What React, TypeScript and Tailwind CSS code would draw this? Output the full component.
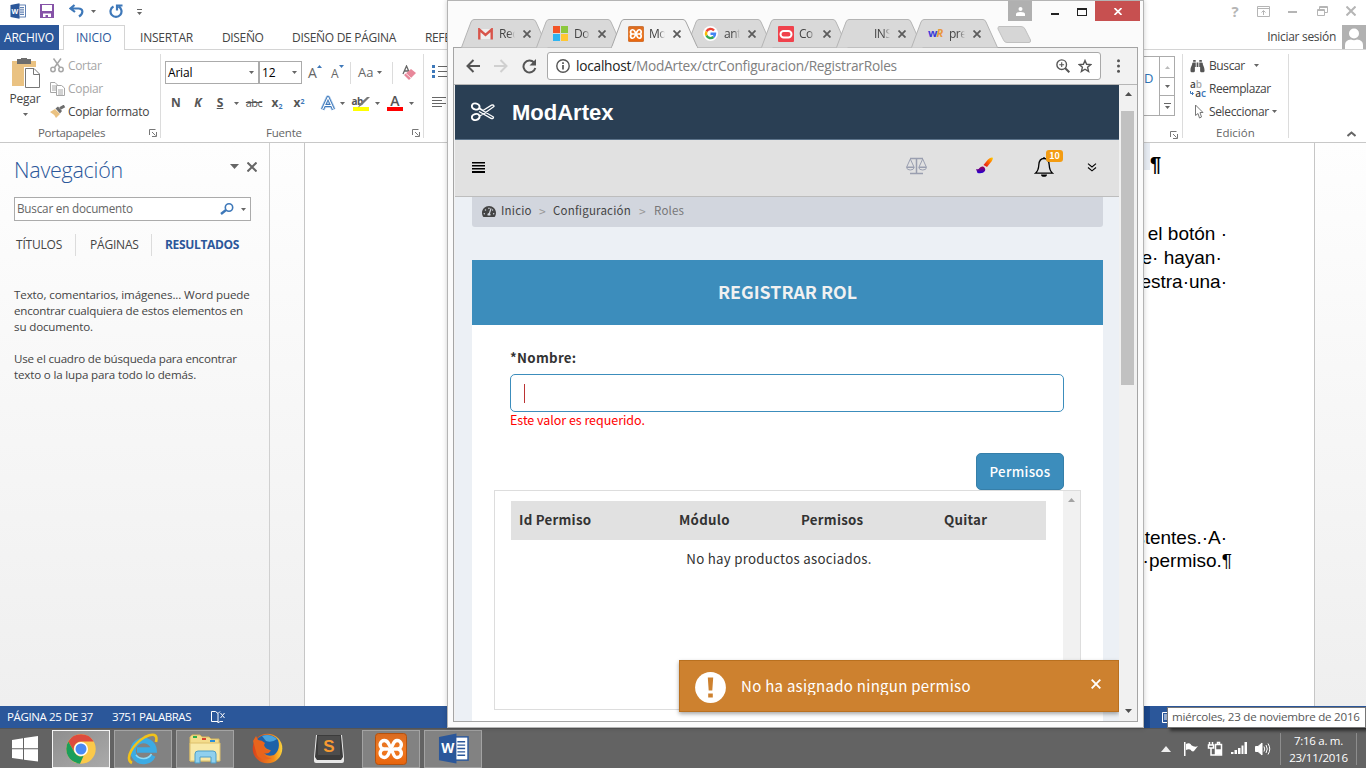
import React from "react";
import { FaTachometerAlt, FaBinoculars } from "react-icons/fa";

const UI = "font-['Open_Sans','Noto_Sans',sans-serif]";
const SRC = "font-['Noto_Sans_CJK_SC','Noto_Sans',sans-serif]";

function Caret({ c = "fill-[#666]" }: { c?: string }) {
  return (
    <svg width="5" height="3" viewBox="0 0 5 3" className={"shrink-0 " + c}>
      <path d="M0 0H5L2.500 3Z" />
    </svg>
  );
}

function Launcher() {
  return (
    <svg width="8" height="8" viewBox="0 0 8 8" className="shrink-0 fill-none stroke-[#777]">
      <path d="M0.500 6V0.500H6.500M3 3L6.500 6.500M7.500 3V7.500H3" />
    </svg>
  );
}

function WordLogo({ size }: { size: number }) {
  return (
    <svg width={size} height={size} viewBox="0 0 32 32" className="shrink-0">
      <rect x="17" y="4" width="14" height="24" fill="#fff" stroke="#2b579a" strokeWidth="1.500" />
      <path d="M20 9H28M20 12.500H28M20 16H28M20 19.500H28M20 23H28" stroke="#2b579a" strokeWidth="1.500" />
      <path d="M1 4L19 0.500V31.500L1 28Z" fill="#2b579a" />
      <text x="10" y="21" fontSize="14" fontWeight="bold" fill="#fff" textAnchor="middle" fontFamily="Open Sans">W</text>
    </svg>
  );
}

function Xampp({ size }: { size: number }) {
  return (
    <svg width={size} height={size} viewBox="0 0 32 32" className="shrink-0">
      <defs>
        <linearGradient id="xg" x1="0" y1="0" x2="0" y2="1">
          <stop offset="0" stopColor="#d96a20" />
          <stop offset="0.500" stopColor="#f07a22" />
          <stop offset="1" stopColor="#e8640c" />
        </linearGradient>
      </defs>
      <rect x="0.500" y="0.500" width="31" height="31" rx="3" fill="url(#xg)" stroke="#b3520f" />
      <path
        d="M8.500 16A4.300 4.300 0 0 1 9.500 7.500C13.500 7.500 13.500 11 16 15.500S18.500 24.500 22 24.500A4.300 4.300 0 0 0 23 16H19.500M23 16A4.300 4.300 0 0 0 22 7.500C18.500 7.500 18.500 11 16 15.500S13.500 24.500 9.500 24.500A4.300 4.300 0 0 1 8.500 16H12.500"
        fill="none"
        stroke="#fff"
        strokeWidth="3.400"
        strokeLinecap="round"
        strokeLinejoin="round"
      />
    </svg>
  );
}

/* ---------- Word ---------- */

function WordTitleBar() {
  return (
    <div className="flex h-[25px] items-center bg-white">
      <div className="flex w-[447px] items-center pl-[10px] pb-[3px]">
        <WordLogo size={16} />
        <svg width="14" height="14" viewBox="0 0 14 14" className="ml-[14px]">
          <path d="M0 0H14V14H0Z" fill="#8653a8" />
          <path d="M2 1H12V7H2ZM3 9.500H11V13H8V11H5.500V13H3Z" fill="#fff" />
        </svg>
        <svg width="15" height="14" viewBox="0 0 15 14" className="ml-[15px] fill-none stroke-[#3e78b9]" strokeWidth="2.200">
          <path d="M5.500 1L1.500 4.500L6 8M2 4.500H9.500C14 4.500 15 9 10 12.500" />
        </svg>
        <span className="ml-[7px] flex"><Caret /></span>
        <svg width="14" height="15" viewBox="0 0 14 15" className="ml-[13px] fill-none stroke-[#3e78b9]" strokeWidth="2.200">
          <path d="M4.500 2.500A5.500 5.500 0 1 0 9.500 2.500M8 6.500V1.500H13.500" />
        </svg>
        <svg width="7" height="7" viewBox="0 0 7 7" className="ml-[13px] mt-[3px] fill-[#666]">
          <path d="M1 0H6V1H1ZM1 3H6L3.500 6Z" />
        </svg>
      </div>
      <div className="ml-auto flex w-[138px] items-center pb-[3px] text-[#b5b5b5]">
        <span className={UI + " ml-[2px] w-[10px] text-center text-[15px] font-bold leading-[16px]"}>?</span>
        <svg width="13" height="11" viewBox="0 0 13 11" className="ml-[17px] fill-none stroke-current">
          <path d="M0.500 0.500H12.500V10.500H0.500ZM0.500 2.500H12.500M6.500 9V5M4.500 6.500L6.500 4.500L8.500 6.500" />
        </svg>
        <svg width="9" height="3" className="ml-[18px] mt-[3px] fill-current"><path d="M0 0H9V2H0Z" /></svg>
        <svg width="11" height="10" viewBox="0 0 11 10" className="ml-[20px] fill-none stroke-current">
          <path d="M0.500 3.500H7.500V9.500H0.500ZM0.500 4.500H7.500M2.500 3V0.500H10.500V6.500H8M2.500 1.500H10.500" />
        </svg>
        <svg width="10" height="10" viewBox="0 0 10 10" className="ml-[18px] fill-none stroke-current" strokeWidth="2">
          <path d="M0.500 0.500L9.500 9.500M9.500 0.500L0.500 9.500" />
        </svg>
      </div>
    </div>
  );
}

function WordTabs() {
  return (
    <div className={UI + " flex h-[25px] items-center whitespace-nowrap border-b border-[#d4d4d4] bg-white text-[12px] text-[#444]"}>
      <div className="flex h-[25px] w-[59px] items-center bg-[#2b579a] pl-[4px] pt-px text-white tracking-[-0.2px]">ARCHIVO</div>
      <div className="ml-[4px] mt-px flex h-[25px] w-[62px] items-center border-x border-t border-[#d4d4d4] bg-white pl-[12px] text-[#2b579a] tracking-[-0.1px]">INICIO</div>
      <span className="ml-[15px] mt-px w-[82px] tracking-[-0.2px]">INSERTAR</span>
      <span className="mt-px w-[70px] tracking-[-0.35px]">DISEÑO</span>
      <span className="mt-px w-[133px] tracking-[-0.3px]">DISEÑO DE PÁGINA</span>
      <span className="mt-px tracking-[-0.35px]">REFERENCIAS</span>
      <span className="ml-auto mr-[6px] tracking-[-0.3px]">Iniciar sesión</span>
      <svg width="24" height="24" viewBox="0 0 24 24" className="shrink-0">
        <rect width="24" height="24" fill="#b1b1b1" />
        <circle cx="12" cy="8.500" r="5" fill="#fff" />
        <path d="M3 24V20Q3 15 9 14.500Q12 16 15 14.500Q21 15 21 20V24Z" fill="#fff" />
      </svg>
    </div>
  );
}

function Sep() {
  return <span className="h-[22px] w-px bg-[#dcdcdc]" />;
}

function Ribbon() {
  return (
    <div className={UI + " flex h-[93px] whitespace-nowrap border-b border-[#c8c8c8] bg-white text-[12px] text-[#444]"}>
      <div className="flex w-[160px] shrink-0 flex-col">
        <div className="flex h-[75px]">
          <div className="flex w-[50px] flex-col items-center pt-[8px]">
            <svg width="29" height="31" viewBox="0 0 29 31" className="ml-[3px]">
              <path d="M0 3H24V28H0Z" fill="#eac282" />
              <path d="M5 1H9V0H15V1H19V6H5Z" fill="#6d6d6d" />
              <path d="M12 9H29V31H12Z" fill="#fff" />
              <path d="M13.500 10.500H22L27.500 16V29.500H13.500Z" fill="#fff" stroke="#777" />
              <path d="M21.500 10.500V16.500H27.500" fill="none" stroke="#777" />
            </svg>
            <span className="mt-[1px] leading-[18px] tracking-[-0.25px]">Pegar</span>
            <span className="mt-[5px]"><Caret /></span>
          </div>
          <div className="flex flex-col pt-[4px]">
            <div className="flex h-[23px] items-center text-[#a6a6a6]">
              <svg width="15" height="15" viewBox="0 0 15 15" className="mr-[3px] fill-none stroke-current" strokeWidth="1.500">
                <circle cx="3" cy="11.500" r="2.200" /><circle cx="11" cy="11.500" r="2.200" /><path d="M3.500 0.500L10 9.500M11 0.500L4.500 9.500" />
              </svg>
              <span className="tracking-[-0.35px]">Cortar</span>
            </div>
            <div className="flex h-[23px] items-center text-[#a6a6a6]">
              <svg width="15" height="14" viewBox="0 0 15 14" className="mr-[3px] fill-none stroke-current">
                <path d="M0.500 0.500H5L7.500 3V10.500H0.500ZM2 4H6M2 6H6M2 8H6" /><path d="M6.500 3.500H11.500L14.500 6V13.500H6.500Z" className="fill-white" /><path d="M8 8H13M8 10H13M8 12H13" />
              </svg>
              <span className="tracking-[-0.3px]">Copiar</span>
            </div>
            <div className="flex h-[23px] items-center">
              <svg width="16" height="14" viewBox="0 0 16 14" className="mr-[2px]">
                <path d="M0 7L5 4L10 9L6 13Q4 9 0 7Z" fill="#eac282" /><path d="M5.500 3.500L8 1.500L12 6L10 8.500Z" fill="#6d6d6d" /><path d="M10 3.500L14.500 1" stroke="#6d6d6d" strokeWidth="3" />
              </svg>
              <span className="tracking-[-0.3px]">Copiar formato</span>
            </div>
          </div>
        </div>
        <div className="mt-px flex items-center text-[#666]">
          <span className="ml-[38px] w-[111px] text-[11.500px] leading-[18px] tracking-[-0.3px]">Portapapeles</span>
          <Launcher />
        </div>
      </div>
      <span className="mt-[4px] h-[84px] w-px bg-[#dcdcdc]" />
      <div className="flex w-[262px] shrink-0 flex-col pl-[4px]">
        <div className="flex h-[75px] flex-col">
          <div className="flex h-[43px] items-center pt-[2px]">
            <div className="flex h-[23px] w-[94px] items-center justify-between border border-[#ababab] pl-[2px] pr-[4px] text-black tracking-[-0.2px]">Arial<Caret /></div>
            <div className="flex h-[23px] w-[43px] items-center justify-between border border-[#ababab] pl-[2px] pr-[4px] text-black tracking-[-0.2px]">12<Caret /></div>
            <span className="ml-[6px] flex w-[23px] items-start text-[14px] text-[#666]">A<svg width="5" height="3" className="mt-[3px] fill-[#3e78b9]"><path d="M0 3H5L2.500 0Z" /></svg></span>
            <span className="flex w-[19px] items-start pt-[2px] text-[12px] text-[#666]">A<svg width="5" height="3" className="fill-[#3e78b9]"><path d="M0 0H5L2.500 3Z" /></svg></span>
            <Sep />
            <span className="ml-[7px] flex w-[34px] items-center gap-[4px] text-[13px] text-[#666]">Aa<Caret /></span>
            <Sep />
            <svg width="15" height="16" viewBox="0 0 15 16" className="ml-[9px]">
              <path d="M1 9L4.500 1L8 9M2.500 6H6.500" fill="none" stroke="#666" strokeWidth="1.300" />
              <path d="M2 10L9 4L14 8L7 15Z" fill="#e8879a" /><path d="M4 8.500L9 13" stroke="#fff" strokeWidth="0.800" />
            </svg>
          </div>
          <div className="flex h-[20px] items-center text-[12px] text-[#555]">
            <b className="w-[22px] text-center">N</b>
            <b className="w-[22px] text-center italic">K</b>
            <b className="w-[22px] text-center underline">S</b>
            <span className="flex w-[11px] justify-center"><Caret /></span>
            <span className="w-[24px] text-center text-[11px] tracking-[-0.6px] line-through">abc</span>
            <span className="w-[22px] text-center font-bold">x<sub className="text-[7px] text-[#3e78b9]">2</sub></span>
            <span className="w-[22px] text-center font-bold">x<sup className="text-[7px] text-[#3e78b9]">2</sup></span>
            <span className="ml-[3px]"><Sep /></span>
            <svg width="18" height="17" viewBox="0 0 18 17" className="ml-[6px] fill-none" strokeLinejoin="round">
              <path d="M3.500 14.500L9 2.500L14.500 14.500M5.500 10.500H12.500" stroke="#a9c8ea" strokeWidth="4.500" />
              <path d="M3.500 14.500L9 2.500L14.500 14.500M5.500 10.500H12.500" stroke="#3e78b9" strokeWidth="3" />
              <path d="M3.500 14.500L9 2.500L14.500 14.500M5.500 10.500H12.500" stroke="#fff" strokeWidth="1.100" />
            </svg>
            <span className="flex w-[11px] justify-center"><Caret /></span>
            <span className="ml-[1px] flex w-[23px] flex-col items-center">
              <span className="relative w-[18px] text-[10px] font-bold leading-[11px] tracking-[-0.5px]">ab
                <svg width="12" height="11" viewBox="0 0 12 11" className="absolute left-[6px] top-px"><path d="M12 0L4 8L0 10.500L2 6.500L9 0Z" fill="#777" /></svg>
              </span>
              <span className="h-[4px] w-[16px] bg-[#ff0]" />
            </span>
            <span className="flex w-[11px] justify-center"><Caret /></span>
            <span className="ml-[1px] flex w-[22px] flex-col items-center text-[14px] font-semibold leading-[12px]">
              A<span className="h-[4px] w-[16px] bg-[red]" />
            </span>
            <span className="flex w-[11px] justify-center"><Caret /></span>
          </div>
        </div>
        <div className="mt-px flex items-center text-[#666]">
          <span className="ml-[101px] w-[146px] text-[11.500px] leading-[18px] tracking-[-0.2px]">Fuente</span>
          <Launcher />
        </div>
      </div>
      <span className="mt-[4px] h-[84px] w-px bg-[#dcdcdc]" />
      <div className="flex w-[720px] shrink-0 flex-col pl-[8px] pt-[13px]">
        <svg width="16" height="48" viewBox="0 0 16 48">
          <path d="M6 3.500H16M6 8.500H16M6 13.500H16M0 34.500H14M0 37.500H10M0 40.500H14M0 43.500H10" stroke="#666" />
          <path d="M0 2H3V5H0ZM0 7H3V10H0ZM0 12H3V15H0Z" fill="#3e78b9" />
        </svg>
      </div>
      <div className="flex w-[38px] shrink-0 flex-col items-end">
        <div className="mr-[7px] mt-[6px] flex h-[60px] w-[31px] border-y border-r border-[#ababab]">
          <span className="flex-1 pt-[12px] text-[13px] text-[#2e74b5]">D</span>
          <div className="flex w-[15px] flex-col border-l border-[#ababab]">
            <span className="flex h-[20px] items-center justify-center"><svg width="5" height="3" className="fill-[#bbb]"><path d="M0 3H5L2.500 0Z" /></svg></span>
            <span className="flex h-[19px] items-center justify-center border-y border-[#ababab]"><Caret /></span>
            <span className="flex flex-1 flex-col items-center justify-center gap-[2px]"><span className="h-px w-[7px] bg-[#666]" /><Caret /></span>
          </div>
        </div>
        <span className="mr-[4px] mt-[15px]"><Launcher /></span>
      </div>
      <span className="mt-[4px] h-[84px] w-px bg-[#dcdcdc]" />
      <div className="flex w-[105px] shrink-0 flex-col pl-[7px]">
        <div className="flex h-[75px] flex-col pt-[4px]">
          <div className="flex h-[23px] items-center"><FaBinoculars className="mr-[4px] h-[14px] w-[15px] text-[#555]" /><span className="w-[45px] tracking-[-0.4px]">Buscar</span><Caret /></div>
          <div className="flex h-[23px] items-center">
            <span className="mr-[3px] flex h-[18px] w-[16px] flex-col text-[10px] font-semibold leading-[9px]">
              <span>a<span className="text-[#aaa]">b</span></span>
              <span className="flex items-center justify-between">
                <svg width="4" height="5" viewBox="0 0 4 5" className="fill-none stroke-[#3e78b9]"><path d="M0.500 0V2.500H3M2 1L3.500 2.500L2 4" /></svg>
                <span>a<span className="text-[#3e78b9]">c</span></span>
              </span>
            </span>
            <span className="tracking-[-0.45px]">Reemplazar</span>
          </div>
          <div className="flex h-[23px] items-center">
            <svg width="9" height="15" viewBox="0 0 9 15" className="ml-[5px] mr-[5px] fill-white stroke-[#777]"><path d="M0.500 1L8 8.500H5L6.500 13L4.500 14L3 9.500L0.500 11.500Z" /></svg>
            <span className="w-[63px] tracking-[-0.35px]">Seleccionar</span><Caret />
          </div>
        </div>
        <span className="ml-[26px] mt-px text-[11.500px] leading-[18px] text-[#666]">Edición</span>
      </div>
      <span className="mt-[4px] h-[84px] w-px bg-[#dcdcdc]" />
      <svg width="9" height="6" viewBox="0 0 9 6" className="ml-[58px] mt-[81px] fill-none stroke-[#666]" strokeWidth="2"><path d="M0.500 5L4.500 1.500L8.500 5" /></svg>
    </div>
  );
}

function NavPane() {
  return (
    <div className={UI + " w-[270px] shrink-0 whitespace-nowrap border-r border-[#d0d0d0] pl-[14px] text-[12px] text-[#444]"}>
      <div className="flex h-[53px] items-center">
        <span className="w-[216px] pt-px text-[21.500px] font-light tracking-[-0.26px] text-[#2b579a]">Navegación</span>
        <svg width="9" height="5" className="mb-[6px] fill-[#666]"><path d="M0 0H9L4.500 5Z" /></svg>
        <svg width="10" height="10" viewBox="0 0 10 10" className="mb-[6px] ml-[8px] fill-none stroke-[#666]" strokeWidth="2"><path d="M0.500 0.500L9.500 9.500M9.500 0.500L0.500 9.500" /></svg>
      </div>
      <div className="mt-[1px] flex h-[24px] w-[237px] items-center border border-[#ababab] bg-white pl-[2px]">
        <span className="w-[203px] text-[11.700px] tracking-[-0.2px] text-[#666]">Buscar en documento</span>
        <svg width="14" height="12" viewBox="0 0 14 12" className="fill-none stroke-[#3e78b9]"><circle cx="9" cy="4.500" r="3.700" strokeWidth="1.600" /><path d="M1 11L6 7" strokeWidth="2.400" /></svg>
        <span className="ml-[7px]"><Caret /></span>
      </div>
      <div className="mt-[13px] flex h-[22px] items-center">
        <span className="ml-[2px] w-[59px] tracking-[-0.2px]">TÍTULOS</span><Sep />
        <span className="ml-[14px] w-[61px] tracking-[-0.2px]">PÁGINAS</span><Sep />
        <b className="ml-[13px] tracking-[-0.33px] text-[#2b579a]">RESULTADOS</b>
      </div>
      <div className="mt-[31px] text-[11.600px] leading-[16px]">
        <p className="tracking-[-0.12px]">Texto, comentarios, imágenes... Word puede</p>
        <p className="tracking-[-0.22px]">encontrar cualquiera de estos elementos en</p>
        <p className="tracking-[-0.15px]">su documento.</p>
        <p className="mt-[16px] tracking-[-0.22px]">Use el cuadro de búsqueda para encontrar</p>
        <p className="tracking-[-0.17px]">texto o la lupa para todo lo demás.</p>
      </div>
    </div>
  );
}

function WordBody() {
  return (
    <div className="flex h-[563px] bg-linear-to-b from-[#fefefe] to-[#efefef]">
      <NavPane />
      <div className="ml-[34px] flex w-[1011px] flex-col items-end whitespace-pre border-x border-[#c6c6c6] bg-white pr-[87px] font-['Liberation_Sans',sans-serif] text-[19px] leading-[24px] text-black">
        <div className="mr-[66px] flex h-[27px] items-center">
          <span className="h-[27px] w-[7px] bg-[#e7ecf3]" />
          <span className="pt-[14px] text-[20px] font-bold">¶</span>
        </div>
        <span className="mt-[52px]">mediante· el botón ·</span>
        <span>que· no· se· hayan· </span>
        <span>se· muestra·una·</span>
        <span className="mt-[232px]">existentes.·A·</span>
        <span className="-mr-[5px] -mt-px">un·permiso.¶</span>
      </div>
    </div>
  );
}

function StatusBar() {
  return (
    <div className={UI + " flex h-[22px] items-center whitespace-nowrap bg-[#2b579a] text-[11.500px] text-white"}>
      <span className="ml-[7px] w-[105px] tracking-[-0.38px]">PÁGINA 25 DE 37</span>
      <span className="w-[99px] tracking-[-0.45px]">3751 PALABRAS</span>
      <svg width="15" height="12" viewBox="0 0 15 12" className="fill-none stroke-white"><path d="M7 10.500H0.500V0.500H4.500L7 2.500V12L9 10.500H12M7 2.500L9 0.500M9.500 2L13.500 7M13.500 2L9.500 7" /></svg>
      <div className="ml-auto flex h-[22px] w-[222px] items-center">
        <span className="h-[22px] w-[6px] bg-[#1b468a]" />
        <svg width="10" height="11" viewBox="0 0 10 11" className="ml-[12px] fill-none stroke-white"><path d="M0.500 0.500H9.500V10.500H0.500ZM2 3H8M2 5H8M2 7H8" /></svg>
      </div>
    </div>
  );
}

/* ---------- Taskbar ---------- */

function TaskButton({ children, look = "plain" }: { children: React.ReactNode; look?: "plain" | "open" | "active" }) {
  const looks = {
    plain: "border-transparent",
    open: "border-[#a3a3a3] bg-[#828282]",
    active: "border-[#f4f4f4] bg-linear-to-br from-[#8e8e8e] to-[#aaa]",
  };
  return <div className={"flex h-[38px] w-[58px] items-center justify-center border " + looks[look]}>{children}</div>;
}

function Taskbar() {
  return (
    <div className="flex h-[40px] items-center border-t border-[#555] bg-[#636363]">
      <svg width="27" height="26" viewBox="0 0 27 26" className="ml-[12px] mr-[13px] fill-white">
        <path d="M0 4L11 2.300V12.300H0ZM12 2.100L26 0V12.300H12ZM0 13.300H11V23.500L0 22ZM12 13.300H26V25.500L12 23.700Z" />
      </svg>
      <div className="flex gap-[4px]">
        <TaskButton look="active">
          <svg width="30" height="30" viewBox="0 0 30 30">
            <circle cx="15" cy="15" r="14.700" fill="#fbc94a" />
            <path d="M2.300 7.600A14.700 14.700 0 0 1 27.800 7.600H15A7.400 7.400 0 0 0 8.600 18.600Z" fill="#dd4b3e" />
            <path d="M2.300 7.600L8.600 18.600A7.400 7.400 0 0 0 17.500 22L14 29.700A14.700 14.700 0 0 1 2.300 7.600Z" fill="#1b9e5a" />
            <circle cx="15" cy="15" r="7" fill="#fff" /><circle cx="15" cy="15" r="5.500" fill="#4a8af4" />
          </svg>
        </TaskButton>
        <TaskButton look="open">
          <svg width="32" height="32" viewBox="0 0 32 32" fill="none">
            <path d="M26 22.500A10.500 10.500 0 1 1 27 17H10" stroke="#3cabe4" strokeWidth="5.500" />
            <path d="M24.500 21A9.500 9.500 0 0 1 9 22" stroke="#8fdcf8" strokeWidth="1.500" />
            <path d="M5 30C-3 26 6 11 18 4C26 0 31 1 29 9" stroke="#f2c21a" strokeWidth="2.600" />
          </svg>
        </TaskButton>
        <TaskButton look="open">
          <svg width="32" height="30" viewBox="0 0 32 30">
            <path d="M1 3L3 1H11L13 3H20L22 5H30V27H1Z" fill="#f3dc8c" stroke="#d8b95e" />
            <path d="M4 2H8V4H4Z" fill="#2fae4a" /><path d="M13 4H17V6H13Z" fill="#d9432f" /><path d="M21 6H26V8H21Z" fill="#2a8fd8" />
            <path d="M1 9H31V27H1Z" fill="#f8e9a8" stroke="#dcc06c" />
            <path d="M6 29V20Q6 17 9 17H24Q27 17 27 20V29H22V23H11V29Z" fill="#8fd0ee" stroke="#4f9fc8" />
          </svg>
        </TaskButton>
        <TaskButton>
          <svg width="31" height="31" viewBox="0 0 31 31">
            <defs><linearGradient id="ff" x1="0" y1="0" x2="1" y2="0"><stop offset="0" stopColor="#d8421c" /><stop offset="0.700" stopColor="#f08a1c" /><stop offset="1" stopColor="#fbd43c" /></linearGradient></defs>
            <circle cx="15.500" cy="15.500" r="14.800" fill="url(#ff)" />
            <path d="M5 6A14 14 0 0 1 26 7Q29 16 22 22Q15 24 12 20Q18 20 18 17Q13 16 12 12Q9 10 5 11Z" fill="#1e62a8" />
            <path d="M10 3Q18 0 25 6Q20 10 14 8Z" fill="#4aa3dc" />
            <path d="M1 8L4 3L6 7Q10 7 13 10L11 14Q14 18 19 17Q17 22 11 20Q13 25 20 25Q10 29 5 22Z" fill="#e8641c" />
          </svg>
        </TaskButton>
        <TaskButton>
          <svg width="32" height="30" viewBox="0 0 32 30">
            <path d="M3 1H29L31 23V27Q31 29 29 29H3Q1 29 1 27V23Z" fill="#e8e8e8" />
            <path d="M4 1H28L30 23L28 26H4L2 23Z" fill="#3c3c3c" />
            <path d="M5 2H27V21H5Z" fill="#4d4d4d" />
            <text x="16" y="17.500" fontSize="17" fontWeight="bold" fill="#f79a32" textAnchor="middle" fontFamily="Liberation Sans">S</text>
          </svg>
        </TaskButton>
        <TaskButton look="open"><Xampp size={32} /></TaskButton>
        <TaskButton look="open"><WordLogo size={31} /></TaskButton>
      </div>
      <div className={UI + " ml-auto flex h-[39px] w-[205px] items-center text-[11.500px] text-white"}>
        <svg width="10" height="6" className="fill-[#eee]"><path d="M0 6H10L5 0Z" /></svg>
        <svg width="16" height="16" viewBox="0 0 16 16" className="ml-[12px] fill-white"><path d="M1 1H2.500V15H1ZM3 3Q6 1.500 8 3.500V9Q6 7.500 3 9ZM8 4Q12 7 15 5L11 10Q10 11 8 9.500Z" /></svg>
        <svg width="17" height="16" viewBox="0 0 17 16" className="ml-[8px] fill-none stroke-white" strokeWidth="1.500"><path d="M8.500 3.500H14.500V14H8.500ZM10.500 3V1.500H12.500V3M1.500 4H6.500V7H1.500ZM2.500 4V1M5.500 4V1M4 7V14H8" /><path d="M9.500 9H13.500V13H9.500Z" className="fill-white" /></svg>
        <svg width="17" height="13" viewBox="0 0 17 13" className="ml-[7px] fill-white"><path d="M0 10H2.500V12H0ZM3.500 8H6V12H3.500ZM7 6H9.500V12H7ZM10.500 3.500H12.500V12H10.500ZM13.500 0H16V12H13.500Z" /></svg>
        <svg width="16" height="14" viewBox="0 0 16 14" className="ml-[7px] fill-none stroke-white"><path d="M0.500 4.500H3L7 1V13L3 9.500H0.500Z" className="fill-white" /><path d="M9 4.500Q10.500 7 9 9.500M11 3Q13.500 7 11 11M13 1.500Q16.500 7 13 12.500" /></svg>
        <span className="ml-[9px] h-[32px] w-px bg-[#8d8d8d]" />
        <div className="flex w-[75px] flex-col items-center text-center leading-[17px]">
          <span className="mt-px tracking-[-0.3px]">7:16 a. m.</span>
          <span className="tracking-[-0.25px]">23/11/2016</span>
        </div>
        <span className="h-[32px] w-px bg-[#8d8d8d]" />
      </div>
    </div>
  );
}

/* ---------- Chrome ---------- */

function TabShape({ active }: { active?: boolean }) {
  return (
    <svg width="88" height="29" viewBox="0 0 88 29" className="absolute left-0 top-0">
      <path d="M0.500 28.500L10 3Q11 0.500 13 0.500H72Q74 0.500 75 3L86.500 28.500" className={active ? "fill-[#f2f2f2] stroke-[#a5a5a5]" : "fill-[#d9d9d9] stroke-[#b4b4b4]"} />
      {active && <path d="M1 28.500H86" className="stroke-[#f2f2f2]" strokeWidth="2" />}
    </svg>
  );
}

const tabs: { label: string; icon: React.ReactNode; active?: boolean }[] = [
  { label: "Rec", icon: <svg width="15" height="12" viewBox="0 0 15 12"><path d="M1 1H14V11H1Z" fill="#eee" /><path d="M1.300 11.500V1.500L7.500 7L13.700 1.500V11.500" fill="none" stroke="#d8544a" strokeWidth="2.400" /></svg> },
  { label: "Do", icon: <svg width="15" height="15"><path d="M0 0H7V7H0Z" fill="#f35325" /><path d="M8 0H15V7H8Z" fill="#8cc83c" /><path d="M0 8H7V15H0Z" fill="#2fb4f0" /><path d="M8 8H15V15H8Z" fill="#ffc733" /></svg> },
  { label: "Mo", icon: <Xampp size={16} />, active: true },
  { label: "ant", icon: <svg width="15" height="15" viewBox="0 0 15 15" fill="none" strokeWidth="2.400"><circle cx="7.500" cy="7.500" r="7.500" fill="#fff" /><path d="M11 4.500A4.500 4.500 0 0 0 3.500 5.500" stroke="#ea4335" /><path d="M3.500 5.500A4.500 4.500 0 0 0 3.500 9.500" stroke="#fbbc05" /><path d="M3.500 9.500A4.500 4.500 0 0 0 10.500 11" stroke="#34a853" /><path d="M10.500 11Q12 10 12 7.800H7.500" stroke="#4285f4" /></svg> },
  { label: "Co", icon: <svg width="16" height="16"><rect width="16" height="16" rx="1" fill="#f0424c" /><rect x="2.500" y="5" width="11" height="6.500" rx="3.200" fill="none" stroke="#fff" strokeWidth="2" /></svg> },
  { label: "INS", icon: null },
  { label: "pre", icon: <span className="font-['Open_Sans'] text-[11px] font-bold tracking-[-1px] text-[#3b3bd8]">w<i className="text-[#e8963c]">R</i></span> },
];

function TabStrip() {
  return (
    <div className="relative flex h-[47px] pt-[19px] pl-[13px]">
      {tabs.map((t) => (
        <div key={t.label} className={"relative h-[29px] w-[75px] shrink-0 " + (t.active ? "z-10" : "")}>
          <TabShape active={t.active} />
          <div className="relative flex h-[29px] items-center pl-[17px]">
            <span className="flex w-[21px]">{t.icon}</span>
            <span className={UI + " w-[16px] overflow-hidden whitespace-nowrap text-[12px] text-[#444] tracking-[-0.5px] [mask-image:linear-gradient(to_right,black_60%,transparent)]"}>{t.label}</span>
            <svg width="8" height="8" viewBox="0 0 8 8" className="ml-[8px] stroke-[#5c5c5c]" strokeWidth="1.800"><path d="M0.500 0.500L7.500 7.500M7.500 0.500L0.500 7.500" /></svg>
          </div>
        </div>
      ))}
      <svg width="36" height="18" viewBox="0 0 36 18" className="ml-[11px] mt-[7px] fill-[#d6d6d6] stroke-[#c0c0c0]"><path d="M2 0.500H24Q27 0.500 28 3L33.500 14Q34 16.500 32 16.500H10Q7.500 16.500 6.500 14L1 3Q0.500 1 2 0.500Z" /></svg>
      <div className="absolute right-[3px] top-px flex h-[20px] items-center">
        <div className="flex h-[20px] w-[24px] items-center justify-center bg-[#b0b0b0]">
          <svg width="9" height="9" viewBox="0 0 9 9" className="fill-white"><circle cx="4.500" cy="2" r="2" /><path d="M0 9V7Q0 5 4.500 5Q9 5 9 7V9Z" /></svg>
        </div>
        <span className="ml-[19px] mt-[6px] h-[2px] w-[8px] bg-[#222]" />
        <span className="ml-[18px] mt-[1px] h-[8px] w-[10px] border border-t-2 border-[#222]" />
        <div className="ml-[8px] flex h-[20px] w-[45px] items-center justify-center bg-[#c75050]">
          <svg width="8" height="7" viewBox="0 0 8 7" className="stroke-white" strokeWidth="1.700"><path d="M0.500 0L7.500 7M7.500 0L0.500 7" /></svg>
        </div>
      </div>
    </div>
  );
}

function Toolbar() {
  return (
    <div className="flex h-[38px] items-center border-y border-b-[#b6b6b6] border-t-[#a5a5a5] bg-[#f2f2f2]">
      <svg width="14" height="14" viewBox="0 0 14 14" className="ml-[12px] fill-none stroke-[#555]" strokeWidth="2"><path d="M14 7H1.500M7.500 1L1.500 7L7.500 13" /></svg>
      <svg width="14" height="14" viewBox="0 0 14 14" className="ml-[14px] fill-none stroke-[#d0d0d0]" strokeWidth="2"><path d="M0 7H12.500M6.500 1L12.500 7L6.500 13" /></svg>
      <svg width="15" height="15" viewBox="0 0 15 15" className="ml-[14px]"><path d="M12 3.500A6 6 0 1 0 13.300 9" fill="none" stroke="#555" strokeWidth="2" /><path d="M14 0V6.500H7.500Z" fill="#555" /></svg>
      <div className="ml-[10px] flex h-[28px] w-[554px] items-center rounded-[3px] border border-[#a9a9a9] bg-white pl-[8px]">
        <svg width="14" height="14" viewBox="0 0 14 14" className="fill-none stroke-[#555]" strokeWidth="1.400"><circle cx="7" cy="7" r="6.200" /><path d="M7 6V10.500M7 3.300V4.900" strokeWidth="1.700" /></svg>
        <span className={UI + " ml-[6px] w-[480px] whitespace-nowrap text-[13.700px] leading-[18px] tracking-[-0.24px] text-[#808080]"}><span className="text-[#222]">localhost</span>/ModArtex/ctrConfiguracion/RegistrarRoles</span>
        <svg width="14" height="14" viewBox="0 0 14 14" className="fill-none stroke-[#555]" strokeWidth="1.400"><circle cx="5.700" cy="5.700" r="4.800" /><path d="M3.300 5.700H8.100M5.700 3.300V8.100" strokeWidth="1.100" /><path d="M9 9L13.300 13.300" strokeWidth="2" /></svg>
        <svg width="14" height="14" viewBox="0 0 14 14" className="ml-[8px] fill-none stroke-[#555]" strokeWidth="1.400"><path d="M7 1.500L8.600 5.300L12.800 5.600L9.600 8.300L10.600 12.400L7 10.200L3.400 12.400L4.400 8.300L1.200 5.600L5.400 5.300Z" /></svg>
      </div>
      <svg width="3" height="14" viewBox="0 0 3 14" className="ml-[16px] fill-[#555]"><circle cx="1.500" cy="1.700" r="1.500" /><circle cx="1.500" cy="7" r="1.500" /><circle cx="1.500" cy="12.300" r="1.500" /></svg>
    </div>
  );
}

function SiteHeader() {
  return (
    <>
      <div className="flex h-[55px] shrink-0 items-center border-b border-[#5c738a] bg-[#2a3f54]">
        <svg width="24" height="20" viewBox="0 0 24 20" className="ml-[16px] fill-none stroke-white">
          <ellipse cx="4.700" cy="4.500" rx="3.900" ry="3" strokeWidth="1.900" transform="rotate(15 4.700 4.500)" /><ellipse cx="4.700" cy="15" rx="3.900" ry="3" strokeWidth="1.900" transform="rotate(-15 4.700 15)" />
          <path d="M8.500 6L12 8.500L20.500 3.200Q23 2.500 23 4.500L12.500 12L8.500 14M8 6.500L22.500 15Q22.500 17 20 16.300L8 9.500" strokeWidth="1.300" />
        </svg>
        <span className="ml-[17px] mt-px font-['Liberation_Sans',sans-serif] text-[22px] font-bold leading-[24px] text-white">ModArtex</span>
      </div>
      <div className="flex h-[57px] shrink-0 items-center border-b border-[#bdbdbd] bg-[#e1e1e1]">
        <svg width="13" height="11" className="ml-[17px] mb-px fill-black"><path d="M0 0H13V1.500H0ZM0 3H13V4.500H0ZM0 6H13V7.500H0ZM0 9H13V11H0Z" /></svg>
        <svg width="21" height="18" viewBox="0 0 21 18" className="ml-[421px] mb-[4px] fill-none stroke-[#9a9fb0]"><path d="M4 1.500H17M10.500 1V16M4 16.500H17" strokeWidth="1.500" /><path d="M4.300 2L0.700 10H8L4.300 2M16.700 2L13 10H20.300L16.700 2M0.500 10.500Q1 13 4.300 13T8.300 10.500ZM12.700 10.500Q13 13 16.700 13T20.500 10.500Z" /></svg>
        <svg width="17" height="17" viewBox="0 0 17 17" className="ml-[49px] mb-[5px]">
          <defs>
            <linearGradient id="b1" x1="1" y1="0" x2="0" y2="1"><stop offset="0" stopColor="#ffd400" /><stop offset="0.450" stopColor="#ff6a00" /><stop offset="1" stopColor="#e00020" /></linearGradient>
            <linearGradient id="b2" x1="0" y1="0" x2="0" y2="1"><stop offset="0" stopColor="#9a0050" /><stop offset="1" stopColor="#2000d8" /></linearGradient>
          </defs>
          <path d="M16.500 0.500Q17.500 2 15.500 4.500L11 10L7.500 8L12 2.500Q14.500 0 16.500 0.500Z" fill="url(#b1)" />
          <path d="M7 9.500Q10 11 9 14Q7 17 1.500 16L0 12Q2.500 13 3.500 11Q5 9 7 9.500Z" fill="url(#b2)" />
        </svg>
        <div className="relative ml-[41px] mb-[3px]">
          <svg width="20" height="21" viewBox="0 0 20 21" className="fill-none stroke-black" strokeWidth="1.300"><path d="M10 1V2M10 2.500C6 2.500 5 5.500 4.800 9C4.600 13 3.500 15.500 1.500 17.200H18.500C16.500 15.500 15.400 13 15.200 9C15 5.500 14 2.500 10 2.500Z" /><path d="M7 18.500A3 2.300 0 0 0 13 18.500" fill="#000" stroke="none" /></svg>
          <span className={SRC + " absolute left-[12px] top-[-6px] h-[12px] w-[17px] rounded-[3px] bg-[#f39c12] text-center text-[9px] font-bold leading-[12px] text-white"}>10</span>
        </div>
        <svg width="10" height="9" viewBox="0 0 10 9" className="ml-[33px] mb-px fill-none stroke-black" strokeWidth="1.100"><path d="M1 0.700L5 4L9 0.700M1 4.500L5 7.800L9 4.500" /></svg>
      </div>
    </>
  );
}

function SitePage() {
  return (
    <div className={SRC + " relative flex w-[664px] shrink-0 flex-col overflow-hidden whitespace-nowrap bg-[#ecf0f5] text-[#333]"}>
      <SiteHeader />
      <div className="mx-[16px] ml-[17px] flex h-[30px] shrink-0 items-center rounded-b-[3px] bg-[#d2d6de] pb-[2px] pl-[10px] text-[11.500px] text-[#444]">
        <FaTachometerAlt className="mr-[5px] h-[13px] w-[14px]" />
        <span className="w-[38px] tracking-[0.2px]">Inicio</span>
        <span className="w-[14px] text-[12px] text-[#999]">&gt;</span>
        <span className="w-[86px] tracking-[0.2px]">Configuración</span>
        <span className="w-[15px] text-[12px] text-[#999]">&gt;</span>
        <span className="tracking-[0.2px] text-[#777]">Roles</span>
      </div>
      <div className="mx-[16px] ml-[17px] mt-[33px] flex h-[500px] shrink-0 flex-col bg-white">
        <div className="flex h-[65px] items-center justify-center bg-[#3c8dbc] pb-[2px] text-[17.800px] font-bold text-[#f1f1f1]">REGISTRAR ROL</div>
        <div className="flex flex-col pl-[38px] pr-[39px] pt-[24px]">
          <span className="text-[13.300px] font-bold leading-[18px] tracking-[0.3px]">*Nombre:</span>
          <div className="mt-[7px] flex h-[38px] items-center rounded-[5px] border border-[#3c8dbc] pl-[13px]"><span className="h-[19px] w-px bg-[#b33]" /></div>
          <span className="-mt-px text-[12.500px] leading-[18px] tracking-[-0.03px] text-[red]">Este valor es requerido.</span>
          <div className="mt-[24px] flex h-[37px] w-[88px] items-center justify-center self-end rounded-[5px] border border-[#367fa9] bg-[#3c8dbc] text-[13.300px] font-medium tracking-[0.3px] text-white">Permisos</div>
        </div>
        <div className="ml-[22px] flex h-[220px] w-[587px] justify-between border border-[#ddd] text-[13.300px]">
          <div className="ml-[16px] mt-[10px] w-[535px]">
            <div className="flex h-[39px] items-center bg-[#e1e1e1] pb-[2px] pl-[8px] font-bold tracking-[0.25px]">
              <span className="w-[160px]">Id Permiso</span><span className="w-[122px]">Módulo</span><span className="w-[143px]">Permisos</span><span>Quitar</span>
            </div>
            <div className="flex h-[39px] items-center justify-center pb-[2px] pl-px tracking-[0.26px]">No hay productos asociados.</div>
          </div>
          <div className="flex w-[17px] flex-col items-center bg-[#f1f1f1] pt-[7px]"><svg width="7" height="4" className="fill-[#a3a3a3]"><path d="M0 4H7L3.500 0Z" /></svg></div>
        </div>
      </div>
      <div className="absolute right-0 top-[575px] flex h-[52px] w-[440px] border border-[#b9701f] bg-[#cd812f] text-white shadow-[0_2px_4px_rgba(0,0,0,0.35)]">
        <svg width="31" height="31" viewBox="0 0 31 31" className="ml-[15px] mt-[11px]"><circle cx="15.500" cy="15.500" r="15.400" fill="#fff" /><path d="M12.800 5.500H18.200L17.300 18.500H13.700ZM13.200 21.500H17.800V25.500H13.200Z" fill="#cd812f" /></svg>
        <span className="ml-[15px] mt-[13px] h-[21px] w-[350px] overflow-hidden text-[15px] leading-[23px] tracking-[0.28px]">No ha asignado ningun permiso</span>
        <svg width="10" height="10" viewBox="0 0 10 10" className="mt-[18px] stroke-white" strokeWidth="1.900"><path d="M0.700 0.700L9.300 9.300M9.300 0.700L0.700 9.300" /></svg>
      </div>
    </div>
  );
}

function ChromeWindow() {
  return (
    <div className="absolute left-[447px] top-0 h-[728px] w-[697px] border border-[#b4b4b4] bg-[#fbfbfb] shadow-[0_0_5px_rgba(0,0,0,0.2)]">
      <div className="-mt-px"><TabStrip /></div>
      <div className="ml-[5px] w-[685px] border-x border-b border-[#a5a5a5]">
        <Toolbar />
        <div className="flex h-[636px] bg-[#f1f1f1] pl-px">
          <SitePage />
          <div className="flex flex-1 flex-col items-center pt-[7px] pb-[8px]">
            <svg width="7" height="4" className="fill-[#505050]"><path d="M0 4H7L3.500 0Z" /></svg>
            <span className="mt-[15px] mr-[2px] h-[274px] w-[13px] bg-[#c1c1c1]" />
            <svg width="7" height="4" className="mt-auto fill-[#505050]"><path d="M0 0H7L3.500 4Z" /></svg>
          </div>
        </div>
      </div>
    </div>
  );
}

export default function App() {
  return (
    <div className="relative flex h-[768px] w-[1366px] flex-col overflow-hidden bg-white">
      <WordTitleBar />
      <WordTabs />
      <Ribbon />
      <WordBody />
      <StatusBar />
      <Taskbar />
      <ChromeWindow />
      <div className={UI + " absolute right-0 top-[707px] flex h-[21px] w-[199px] items-center whitespace-nowrap border border-[#767676] bg-white pb-px pl-[4px] text-[11.600px] tracking-[-0.24px] text-[#575757] shadow-[3px_3px_3px_rgba(0,0,0,0.5)]"}>miércoles, 23 de noviembre de 2016</div>
    </div>
  );
}
